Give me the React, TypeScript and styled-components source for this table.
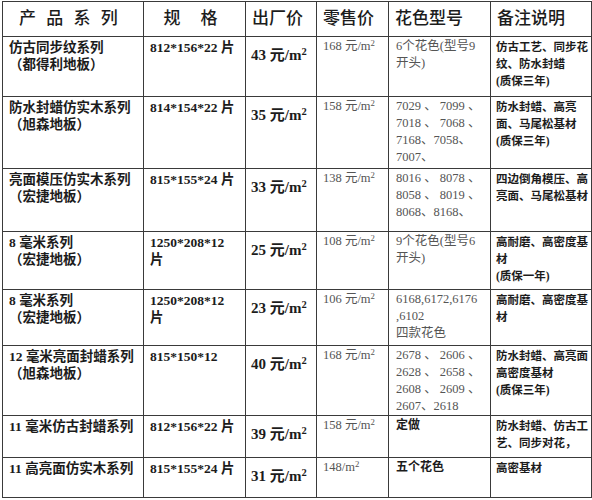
import React from 'react';
import styled, { createGlobalStyle, css } from 'styled-components';

const GlobalStyle = createGlobalStyle`
  body {
    margin: 0;
    background: #ffffff;
    font-family: "Liberation Serif", "Noto Sans CJK SC", serif;
    color: #1c1c1c;
  }
`;

const Page = styled.div`
  padding: 1px 0 0 2px;
`;

const Table = styled.table`
  width: 589px;
  border-collapse: collapse;
  table-layout: fixed;
`;

const HeadCell = styled.th<{ $spacing?: number; $center?: boolean; $indent?: number }>`
  height: 34px;
  padding: 0 6px 0 ${(p) => p.$indent ?? 6}px;
  border: 1.5px solid #3a3a3a;
  font-family: "Liberation Serif", "Noto Sans CJK SC", serif;
  font-size: 17px;
  font-weight: 500;
  text-align: ${(p) => (p.$center ? 'center' : 'left')};
  letter-spacing: ${(p) => p.$spacing ?? 0}px;
  white-space: nowrap;
  vertical-align: middle;
  line-height: 20px;
`;

type Kind = 'name' | 'spec' | 'price' | 'retail' | 'color' | 'colorBold' | 'note';

const kindStyles: Record<Kind, ReturnType<typeof css>> = {
  name: css`
    font-size: 13.5px;
    font-weight: 700;
    padding-top: 2px;
  `,
  spec: css`
    font-size: 13.5px;
    font-weight: 700;
    padding-top: 2px;
  `,
  price: css`
    font-size: 15px;
    font-weight: 700;
    padding-top: 10px;
    padding-left: 5px;
  `,
  retail: css`
    font-size: 12.5px;
    font-weight: 400;
    color: #555;
    padding-top: 1px;
  `,
  color: css`
    font-size: 12.5px;
    font-weight: 400;
    color: #555;
    padding-top: 1px;
    padding-left: 7px;
  `,
  colorBold: css`
    font-size: 12px;
    font-weight: 700;
    padding-top: 1px;
    padding-left: 7px;
  `,
  note: css`
    font-size: 11.5px;
    font-weight: 700;
    padding-top: 2px;
    padding-left: 5px;
  `,
};

const Cell = styled.td<{ $kind: Kind; $height: number }>`
  box-sizing: border-box;
  height: ${(p) => p.$height}px;
  padding: 2px 4px 0 6px;
  border: 1.5px solid #3a3a3a;
  vertical-align: top;
  white-space: nowrap;
  overflow: hidden;
  ${(p) => kindStyles[p.$kind]}
`;

const Line = styled.div`
  height: 17px;
  line-height: 17px;
  overflow: visible;
`;

const Sup = styled.span`
  font-size: 0.7em;
  vertical-align: 0.45em;
  line-height: 0;
`;

const Unit = () => (
  <>
    元/m<Sup>2</Sup>
  </>
);

type Row = {
  height: number;
  name: string[];
  spec: string[];
  price: string;
  retail: React.ReactNode;
  color: string[];
  colorBold?: boolean;
  note: string[];
};

const rows: Row[] = [
  {
    height: 60,
    name: ['仿古同步纹系列', '（都得利地板）'],
    spec: ['812*156*22 片'],
    price: '43',
    retail: <>168 <Unit /></>,
    color: ['6个花色(型号9', '开头)'],
    note: ['仿古工艺、同步花', '纹、防水封蜡', ' (质保三年)'],
  },
  {
    height: 72,
    name: ['防水封蜡仿实木系列', '（旭森地板）'],
    spec: ['814*154*22 片'],
    price: '35',
    retail: <>158 <Unit /></>,
    color: ['7029 、 7099 、', '7018 、 7068 、', '7168、7058、', '7007、'],
    note: ['防水封蜡、高亮', '面、马尾松基材', '(质保三年)'],
  },
  {
    height: 63,
    name: ['亮面模压仿实木系列', '（宏捷地板）'],
    spec: ['815*155*24 片'],
    price: '33',
    retail: <>138 <Unit /></>,
    color: ['8016 、 8078 、', '8058 、 8019 、', '8068、8168、'],
    note: ['四边倒角模压、高', '亮面、马尾松基材'],
  },
  {
    height: 58,
    name: ['8 毫米系列', '（宏捷地板）'],
    spec: ['1250*208*12', '片'],
    price: '25',
    retail: <>108 <Unit /></>,
    color: ['9个花色(型号6', '开头)'],
    note: ['高耐磨、高密度基', '材', '(质保一年)'],
  },
  {
    height: 56,
    name: ['8 毫米系列', '（宏捷地板）'],
    spec: ['1250*208*12', '片'],
    price: '23',
    retail: <>106 <Unit /></>,
    color: ['6168,6172,6176', ',6102', '四款花色'],
    note: ['高耐磨、高密度基', '材'],
  },
  {
    height: 70,
    name: ['12 毫米亮面封蜡系列', '（旭森地板）'],
    spec: ['815*150*12'],
    price: '40',
    retail: <>168 <Unit /></>,
    color: ['2678 、 2606 、', '2628 、 2658 、', '2608 、 2609 、', '2607、2618'],
    note: ['防水封蜡、高亮面', '高密度基材', '(质保三年)'],
  },
  {
    height: 42,
    name: ['11 毫米仿古封蜡系列'],
    spec: ['812*156*22 片'],
    price: '39',
    retail: <>158 <Unit /></>,
    color: ['定做'],
    colorBold: true,
    note: ['防水封蜡、仿古工', '艺、同步对花，'],
  },
  {
    height: 40,
    name: ['11 高亮面仿实木系列'],
    spec: ['815*155*24 片'],
    price: '31',
    retail: <>148/m<Sup>2</Sup></>,
    color: ['五个花色'],
    colorBold: true,
    note: ['高密基材'],
  },
];

const Lines = ({ lines }: { lines: string[] }) => (
  <>
    {lines.map((l, i) => (
      <Line key={i}>{l}</Line>
    ))}
  </>
);

export default function App() {
  return (
    <Page>
      <GlobalStyle />
      <Table>
        <colgroup>
          <col style={{ width: 141 }} />
          <col style={{ width: 102 }} />
          <col style={{ width: 71 }} />
          <col style={{ width: 72 }} />
          <col style={{ width: 102 }} />
          <col style={{ width: 101 }} />
        </colgroup>
        <thead>
          <tr>
            <HeadCell $spacing={3} $indent={16}>产 品 系 列</HeadCell>
            <HeadCell $spacing={8} $center>规 格</HeadCell>
            <HeadCell>出厂价</HeadCell>
            <HeadCell>零售价</HeadCell>
            <HeadCell>花色型号</HeadCell>
            <HeadCell>备注说明</HeadCell>
          </tr>
        </thead>
        <tbody>
          {rows.map((r, i) => (
            <tr key={i}>
              <Cell $kind="name" $height={r.height}>
                <Lines lines={r.name} />
              </Cell>
              <Cell $kind="spec" $height={r.height}>
                <Lines lines={r.spec} />
              </Cell>
              <Cell $kind="price" $height={r.height}>
                <Line>
                  {r.price} <Unit />
                </Line>
              </Cell>
              <Cell $kind="retail" $height={r.height}>
                <Line>{r.retail}</Line>
              </Cell>
              <Cell $kind={r.colorBold ? 'colorBold' : 'color'} $height={r.height}>
                <Lines lines={r.color} />
              </Cell>
              <Cell $kind="note" $height={r.height}>
                <Lines lines={r.note} />
              </Cell>
            </tr>
          ))}
        </tbody>
      </Table>
    </Page>
  );
}
